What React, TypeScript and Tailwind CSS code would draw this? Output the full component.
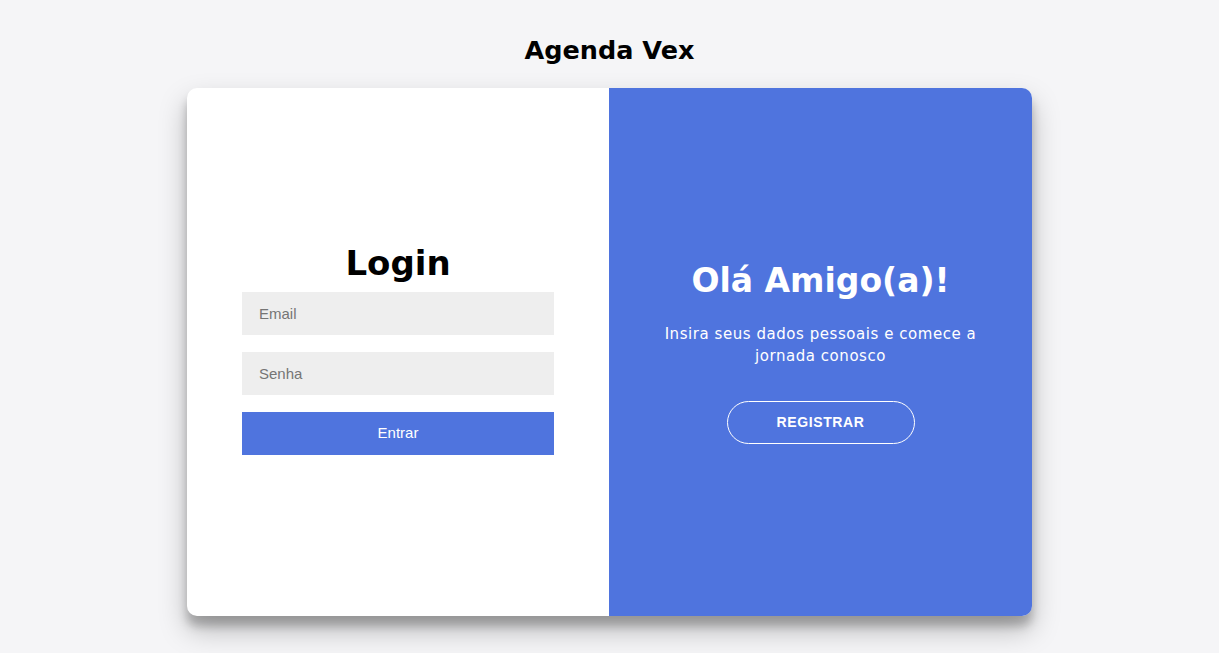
import React from "react";

export default function App() {
  return (
    <main className="min-h-[653px] bg-[#f5f5f7] flex flex-col items-center">
      {/* page title */}
      <h1 className="mt-[34px] mb-[21px] font-['DejaVu_Sans','Noto_Sans',sans-serif] text-[25.5px] leading-[33px] font-bold text-black">
        Agenda Vex
      </h1>

      {/* card */}
      <div className="w-[845px] h-[528px] bg-white rounded-[10px] overflow-hidden flex shadow-[0_14px_28px_rgba(0,0,0,0.25),0_10px_10px_rgba(0,0,0,0.22)]">
        {/* login side */}
        <form className="w-[422px] px-[55px] pb-[7px] flex flex-col justify-center items-center">
          <h2 className="mb-[9px] font-['DejaVu_Sans','Noto_Sans',sans-serif] text-[34px] leading-[40px] font-bold text-black">
            Login
          </h2>
          <div className="w-full flex flex-col gap-[17px] font-['Liberation_Sans',Arial,sans-serif] text-[15px]">
            <input
              type="email"
              placeholder="Email"
              className="w-full h-[43px] bg-[#eeeeee] px-[17px] text-[#333] placeholder:text-[#757575] outline-none"
            />
            <input
              type="password"
              placeholder="Senha"
              className="w-full h-[43px] bg-[#eeeeee] px-[17px] text-[#333] placeholder:text-[#757575] outline-none"
            />
            <button type="button" className="w-full h-[43px] bg-[#4f74de] text-white">
              Entrar
            </button>
          </div>
        </form>

        {/* register side */}
        <section className="w-[423px] bg-[#4f74de] px-[40px] flex flex-col justify-center items-center text-center text-white">
          <h2 className="font-['DejaVu_Sans','Noto_Sans',sans-serif] text-[33px] leading-[40px] font-bold">
            Olá Amigo(a)!
          </h2>
          <p className="mt-[22px] font-['DejaVu_Sans','Noto_Sans',sans-serif] text-[15px] leading-[22px] tracking-[0.55px]">
            Insira seus dados pessoais e comece a
            <br />
            jornada conosco
          </p>
          <button
            type="button"
            className="mt-[34px] w-[188px] h-[43px] rounded-full border border-white font-['Liberation_Sans',Arial,sans-serif] text-[14px] font-bold tracking-[0.6px]"
          >
            REGISTRAR
          </button>
        </section>
      </div>
    </main>
  );
}
